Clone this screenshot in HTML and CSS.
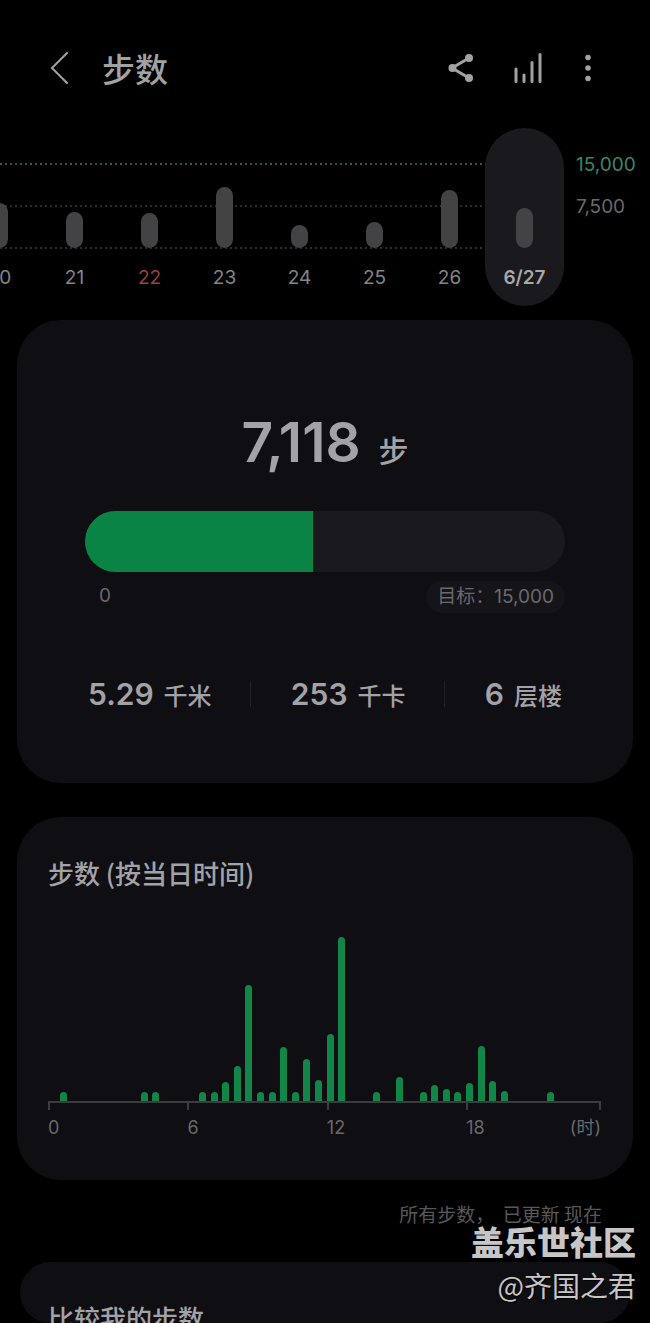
FILE: index.html
```
<!DOCTYPE html>
<html lang="zh-CN">
<head>
  <meta charset="UTF-8">
  <meta name="viewport" content="width=device-width, initial-scale=1.0">
  <title>步数</title>
  <link rel="stylesheet" href="styles.css">
</head>
<body>
  <header class="topbar">
    <button class="icon-btn back" aria-label="返回">
      <svg width="20" height="34" viewBox="0 0 20 34"><path d="M17 2 L2 17 L17 32" /></svg>
    </button>
    <h1>步数</h1>
    <button class="icon-btn share" aria-label="分享">
      <svg width="28" height="30" viewBox="0 0 28 30">
        <path d="M22 5 L5 15 L22 25" />
        <circle cx="22" cy="5" r="4" /><circle cx="5.500" cy="15" r="4" /><circle cx="22" cy="25" r="4" />
      </svg>
    </button>
    <button class="icon-btn stats" aria-label="统计">
      <svg width="30" height="32" viewBox="0 0 30 32"><path d="M4 17 V29.5 M12 23 V29.5 M20 10.500 V29.5 M28 2.500 V29.5" /></svg>
    </button>
    <button class="icon-btn more" aria-label="更多">
      <svg width="8" height="30" viewBox="0 0 8 30"><circle cx="4" cy="4.500" r="2.800" /><circle cx="4" cy="15" r="2.800" /><circle cx="4" cy="25.500" r="2.800" /></svg>
    </button>
  </header>

  <section class="history">
    <div class="week" id="week"></div>
    <div class="scale">
      <span class="goal">15,000</span>
      <span>7,500</span>
    </div>
  </section>

  <main>
    <section class="card today">
      <p class="total">7,118 <span>步</span></p>
      <div class="progress"><div class="progress-fill" id="fill"></div></div>
      <div class="progress-labels">
        <span class="start">0</span>
        <button class="target">目标：15,000</button>
      </div>
      <ul class="stats-row">
        <li>5.29 <span>千米</span></li>
        <li>253 <span>千卡</span></li>
        <li>6 <span>层楼</span></li>
      </ul>
    </section>

    <section class="card hourly">
      <h2>步数 (按当日时间)</h2>
      <div class="hours" id="hours"></div>
      <div class="axis">
        <span>0</span>
        <span>6</span>
        <span>12</span>
        <span class="last">18<em>(时)</em></span>
      </div>
    </section>

    <p class="updated">所有步数，&nbsp; 已更新 现在</p>

    <section class="compare">
      <h2>比较我的步数</h2>
    </section>
  </main>

  <div class="watermark">
    <strong>盖乐世社区</strong>
    <span>@齐国之君</span>
  </div>

  <script>
    const days = [
      { label: '20', height: 45 },
      { label: '21', height: 36 },
      { label: '22', height: 35, type: 'holiday' },
      { label: '23', height: 61 },
      { label: '24', height: 23 },
      { label: '25', height: 26 },
      { label: '26', height: 58 },
      { label: '6/27', height: 40, type: 'selected' }
    ];

    // half-hour slot -> bar height
    const slots = {
      1: 9, 8: 9, 9: 9, 13: 9, 14: 9, 15: 19, 16: 35, 17: 116, 18: 9, 19: 9,
      20: 54, 21: 9, 22: 42, 23: 21, 24: 67, 25: 164, 28: 9, 30: 24, 32: 9,
      33: 16, 34: 12, 35: 9, 36: 18, 37: 55, 38: 20, 39: 10, 43: 9
    };

    document.getElementById('week').innerHTML = days.map(day =>
      `<button class="day ${day.type || ''}"><i style="height: ${day.height}px"></i>${day.label}</button>`
    ).join('');

    let bars = '';
    for (let i = 0; i < 48; i++) {
      bars += `<i style="height: ${slots[i] || 0}px"></i>`;
    }
    document.getElementById('hours').innerHTML = bars;

    document.getElementById('fill').style.width = (7118 / 15000 * 100) + '%';
  </script>
</body>
</html>
```
FILE: styles.css
```
* {
  box-sizing: border-box;
}

body {
  margin: 0;
  position: relative;
  background: #000;
  color: #a3a2a7;
  font-family: Inter, "Noto Sans CJK SC", sans-serif;
  font-size: 19px;
  line-height: 24px;
}

h1, h2, p, ul {
  margin: 0;
  padding: 0;
}

h1, h2 {
  font-family: "Noto Sans CJK SC", sans-serif;
  font-weight: 500;
}

button {
  padding: 0;
  border: none;
  background: none;
  color: inherit;
  font: inherit;
  cursor: pointer;
}

/* top bar */
.topbar {
  display: flex;
  align-items: center;
  height: 128px;
  padding: 8px 58px 0 50px;
}

.topbar h1 {
  flex: 1;
  margin-left: 32px;
  color: #a2a2a2;
  font-size: 33px;
  line-height: 40px;
}

.icon-btn {
  display: flex;
  color: #a2a2a2;
}

.icon-btn svg {
  fill: currentColor;
  stroke: none;
}

.icon-btn path {
  fill: none;
  stroke: currentColor;
  stroke-width: 2;
  stroke-linecap: round;
}

.share {
  margin-right: 37px;
}

.share path,
.stats path {
  stroke-width: 3;
}

.stats {
  margin-right: 42px;
}

/* daily history strip */
.history {
  display: flex;
  height: 178px;
}

.week {
  flex: 1;
  display: flex;
  justify-content: flex-end;
  overflow: hidden;
  background-image:
    linear-gradient(90deg, #35553f 2px, transparent 2px),
    linear-gradient(90deg, #2c2c2c 2px, transparent 2px),
    linear-gradient(90deg, #2c2c2c 2px, transparent 2px);
  background-size: 5px 2px;
  background-repeat: repeat-x;
  background-position: 0 35px, 0 77px, 0 119px;
}

.day {
  flex: none;
  display: flex;
  flex-direction: column;
  align-items: center;
  justify-content: flex-end;
  gap: 18px;
  width: 75px;
  padding-bottom: 16px;
  color: #858585;
}

.day i {
  width: 17px;
  border-radius: 9px;
  background: #434345;
}

.holiday {
  color: #9c4444;
}

.selected {
  width: 79px;
  margin-left: -2px;
  border-radius: 40px;
  background: #1a191d;
  color: #a9a8ad;
  font-weight: 600;
}

.scale {
  display: flex;
  flex-direction: column;
  gap: 18px;
  width: 86px;
  padding: 25px 0 0 12px;
  color: #69696b;
}

.goal {
  color: #3f8560;
}

/* cards */
main {
  padding: 14px 17px 0;
}

.card {
  border-radius: 44px;
  background: #0f0e12;
}

.today {
  padding: 92px 68px 70px;
}

.total {
  display: flex;
  align-items: baseline;
  justify-content: center;
  gap: 18px;
  height: 60px;
  font-size: 55px;
  font-weight: 600;
  line-height: 60px;
}

.total span {
  font-size: 30px;
  font-weight: 500;
}

.progress {
  height: 61px;
  margin-top: 39px;
  overflow: hidden;
  border-radius: 31px;
  background: #1a191d;
}

.progress-fill {
  height: 100%;
  background: #098445;
}

.progress-labels {
  display: flex;
  justify-content: space-between;
  margin-top: 9px;
  color: #69696d;
  line-height: 30px;
}

.start {
  margin-left: 14px;
}

.target {
  height: 32px;
  padding: 0 11px;
  border-radius: 16px;
  background: #151418;
}

.stats-row {
  display: flex;
  justify-content: space-between;
  height: 38px;
  margin-top: 62px;
  padding: 0 3px;
  list-style: none;
  font-size: 30px;
  font-weight: 600;
  line-height: 38px;
}

.stats-row li {
  display: flex;
  align-items: baseline;
  gap: 10px;
}

.stats-row li + li::before {
  content: "";
  align-self: center;
  width: 1px;
  height: 26px;
  margin-right: 30px;
  background: #222125;
}

.stats-row span {
  font-size: 24px;
  font-weight: 500;
}

.hourly {
  margin-top: 34px;
  padding: 40px 32px 40px 31px;
}

h2 {
  font-size: 26px;
  line-height: 32px;
}

.hours {
  display: flex;
  align-items: flex-end;
  justify-content: space-between;
  height: 214px;
  border-bottom: 2px solid #3c3b3e;
}

.hours i {
  width: 7px;
  border-radius: 4px 4px 0 0;
  background: #128549;
}

.axis {
  display: grid;
  grid-template-columns: 30fr 30fr 30fr 29fr;
  color: #69696d;
  font-size: 18px;
}

.axis span::before {
  content: "";
  display: block;
  width: 2px;
  height: 7px;
  margin-bottom: 6px;
  background: #3c3b3e;
}

.axis .last {
  position: relative;
}

.axis .last::after {
  content: "";
  position: absolute;
  top: 0;
  right: 0;
  width: 2px;
  height: 7px;
  background: #3c3b3e;
}

.axis em {
  float: right;
  font-style: normal;
}

.updated {
  padding: 22px 31px 0 0;
  color: #58585a;
  font-family: "Noto Sans CJK SC", sans-serif;
  text-align: right;
}

.compare {
  height: 61px;
  margin: 36px 3px 0;
  padding: 40px 28px 0;
  overflow: hidden;
  border-radius: 40px;
  background: #0f0e12;
}

/* forum watermark over the page corner */
.watermark {
  position: absolute;
  right: 14px;
  bottom: 20px;
  display: flex;
  flex-direction: column;
  gap: 4px;
  align-items: flex-end;
  color: #c6c6c6;
  font-family: "Noto Sans CJK SC", sans-serif;
  font-size: 28px;
  line-height: 36px;
  text-shadow: 1px 1px 1px #000;
}

.watermark strong {
  font-size: 33px;
  font-weight: 900;
  line-height: 44px;
}
```
